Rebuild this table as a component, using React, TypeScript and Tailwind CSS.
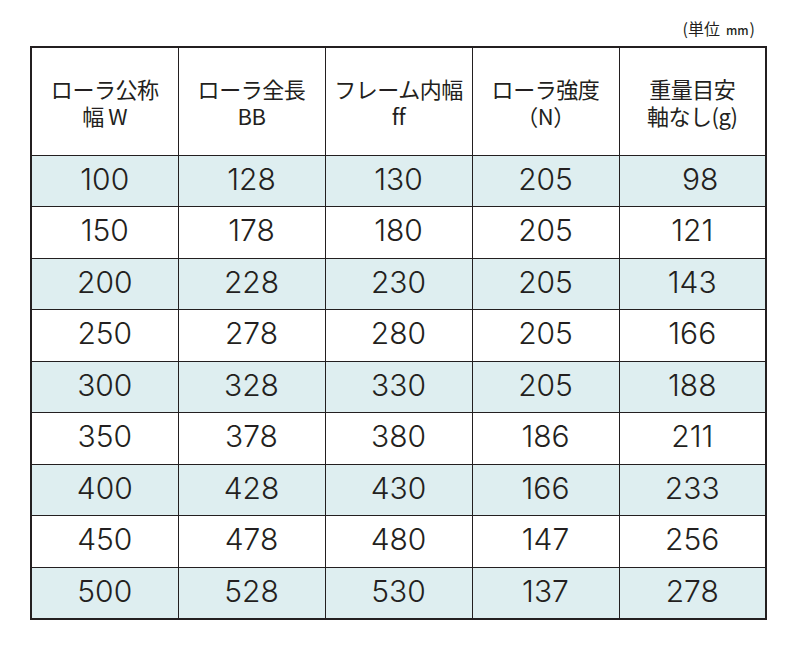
const headers = [
  ['ローラ公称', '幅 W'],
  ['ローラ全長', 'BB'],
  ['フレーム内幅', 'ff'],
  ['ローラ強度', '（N）'],
  ['重量目安', '軸なし(g)'],
];

const rows = [
  [100, 128, 130, 205, 98],
  [150, 178, 180, 205, 121],
  [200, 228, 230, 205, 143],
  [250, 278, 280, 205, 166],
  [300, 328, 330, 205, 188],
  [350, 378, 380, 186, 211],
  [400, 428, 430, 166, 233],
  [450, 478, 480, 147, 256],
  [500, 528, 530, 137, 278],
];

export default function App() {
  return (
    <div className="w-[800px] h-[650px] bg-white text-[#231f20] font-['Noto_Sans_CJK_JP',sans-serif]">
      <div className="w-[737px] ml-[30px] pt-[14px]">
        <div className="flex justify-end items-baseline pr-[12px] h-[32px] text-[16px] leading-[28px]">
          <span>(単位</span>
          <span className="text-[12px] font-medium ml-[6px] mr-[1px]">mm</span>
          <span>)</span>
        </div>
        <table className="w-full border-collapse border-[2.5px] border-[#231f20] table-fixed">
          <thead>
            <tr className="h-[108px]">
              {headers.map((h, i) => (
                <th
                  key={i}
                  className="border-[1.5px] border-[#231f20] font-normal text-[22px] leading-[27px] tracking-[-0.02em] pt-[2px]"
                >
                  <div>{h[0]}</div>
                  <div>{h[1]}</div>
                </th>
              ))}
            </tr>
          </thead>
          <tbody>
            {rows.map((r, i) => (
              <tr key={i} className={`h-[51.5px] ${i % 2 === 0 ? 'bg-[#deeef0]' : 'bg-white'}`}>
                {r.map((v, j) => (
                  <td
                    key={j}
                    className="border-[1.5px] border-[#231f20] text-center text-[30px] leading-none font-['Inter',sans-serif] font-light pb-[4px]"
                  >
                    {j === 4 && v < 100 ? <span className="pl-[16px]">{v}</span> : v}
                  </td>
                ))}
              </tr>
            ))}
          </tbody>
        </table>
      </div>
    </div>
  );
}
